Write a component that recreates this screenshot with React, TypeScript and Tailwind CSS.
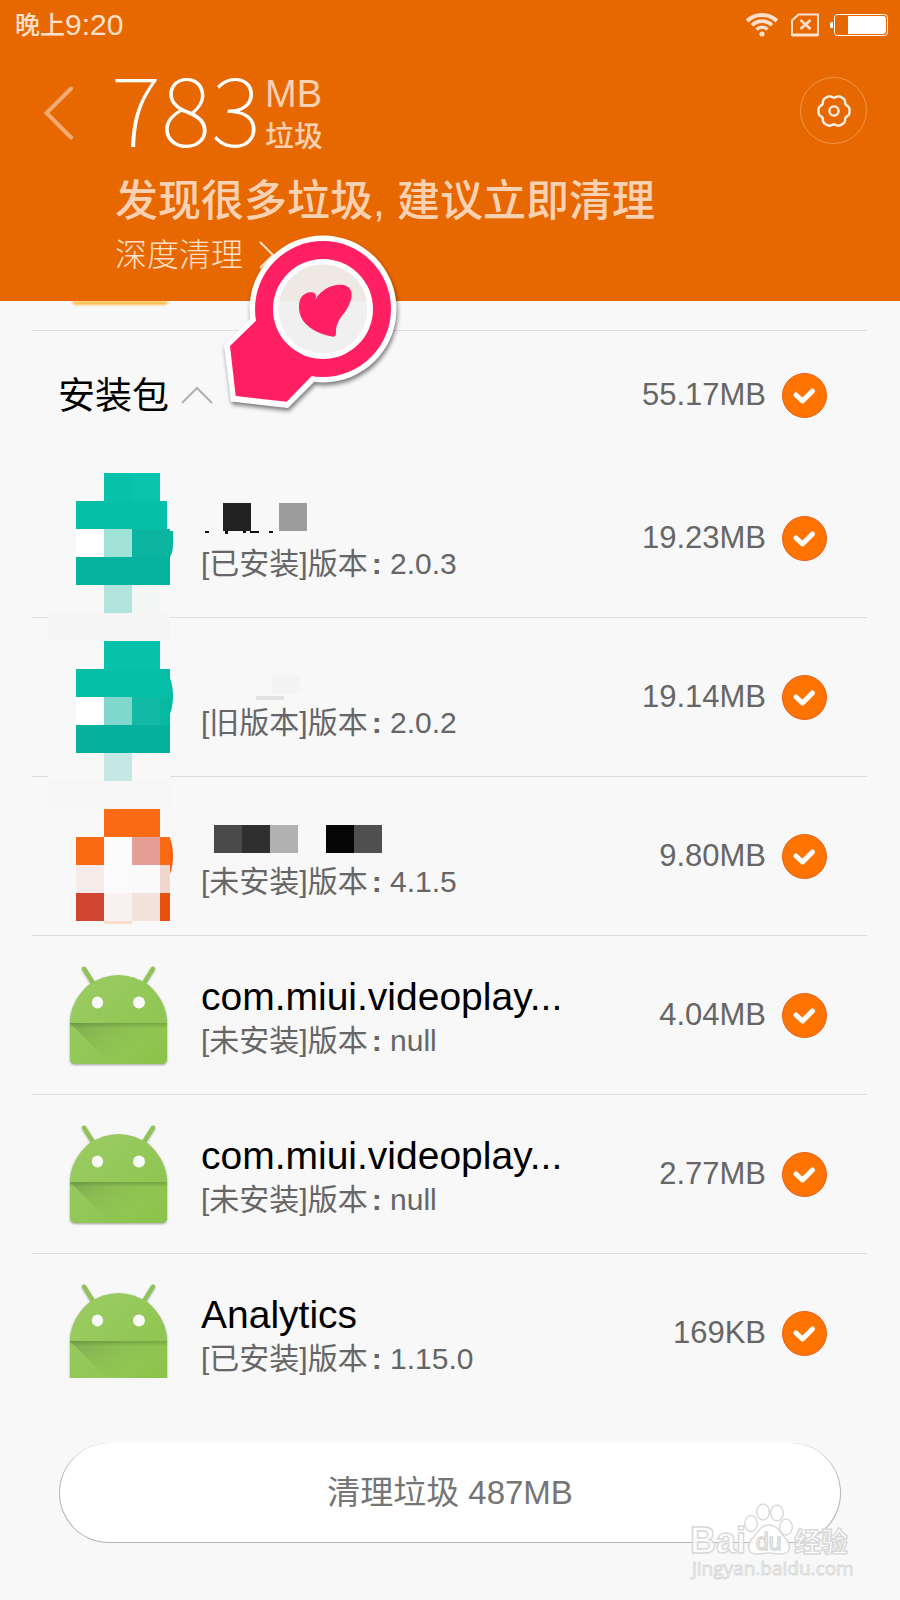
import { useState } from "react";

type Cell = [x: number, y: number, w: number, h: number, fill: string];

type Item = {
  id: number;
  name?: string;
  nameCells?: Cell[];
  iconCells?: Cell[];
  edge?: { d: string; fill: string };
  status: string;
  version: string;
  size: string;
};

const items: Item[] = [
  {
    id: 1,
    nameCells: [
      [22, 0, 28, 28, "#222222"],
      [78, 0, 28, 28, "#9c9c9c"],
      [4, 28, 4, 2, "#111111"],
      [24, 28, 3, 3, "#111111"],
      [42, 28, 3, 2, "#111111"],
      [49, 28, 9, 2, "#111111"],
      [68, 28, 4, 2, "#111111"],
    ],
    iconCells: [
      [56, 14, 28, 28, "#07c2a9"],
      [84, 14, 28, 28, "#0ac3ab"],
      [28, 42, 91, 28, "#05bfa8"],
      [28, 70, 28, 28, "#ffffff"],
      [56, 70, 28, 28, "#a1e3d9"],
      [84, 70, 38, 28, "#0bb5a0"],
      [28, 98, 94, 28, "#05b29f"],
      [56, 126, 28, 28, "#b2e4de"],
      [84, 126, 28, 28, "#f4f6f5"],
      [0, 154, 122, 28, "#f5f5f5"],
    ],
    edge: { d: "M119 72h6v14q0 7-3 12h-3z", fill: "#09b7a1" },
    status: "已安装",
    version: "2.0.3",
    size: "19.23MB",
  },
  {
    id: 2,
    nameCells: [
      [71, 13, 28, 19, "#f4f4f4"],
      [55, 34, 28, 4, "#e2e2e2"],
    ],
    iconCells: [
      [56, 23, 56, 28, "#07c2a9"],
      [28, 51, 94, 28, "#05bfa8"],
      [28, 79, 28, 28, "#ffffff"],
      [56, 79, 28, 28, "#7fd8cb"],
      [84, 79, 28, 28, "#12b9a4"],
      [112, 79, 10, 28, "#07b8a2"],
      [28, 107, 94, 28, "#05b19e"],
      [0, 135, 122, 28, "#f8f8f8"],
      [56, 135, 28, 28, "#c6e8e4"],
      [0, 163, 122, 28, "#f6f6f6"],
    ],
    edge: { d: "M122 60q3 8 3 18t-3 18z", fill: "#07bba5" },
    status: "旧版本",
    version: "2.0.2",
    size: "19.14MB",
  },
  {
    id: 3,
    nameCells: [
      [13, 4, 28, 28, "#4a4a4a"],
      [41, 4, 28, 28, "#2f2f2f"],
      [69, 4, 28, 28, "#b1b1b1"],
      [125, 4, 28, 28, "#060606"],
      [153, 4, 28, 28, "#505050"],
    ],
    iconCells: [
      [56, 32, 56, 28, "#fb6b14"],
      [28, 60, 28, 28, "#fb6b14"],
      [56, 60, 28, 28, "#fcfcfc"],
      [84, 60, 28, 28, "#e59e96"],
      [112, 60, 10, 28, "#fb6b14"],
      [28, 88, 28, 28, "#f6ebe9"],
      [56, 88, 28, 28, "#fcfbfb"],
      [84, 88, 28, 28, "#fafafa"],
      [112, 88, 10, 28, "#f1d6d0"],
      [28, 116, 28, 28, "#d04632"],
      [56, 116, 28, 28, "#f8f3f0"],
      [84, 116, 28, 28, "#f4e3dc"],
      [112, 116, 10, 28, "#e8520f"],
      [56, 144, 28, 3, "#f9dcce"],
    ],
    edge: { d: "M122 61q3 8 3 18t-3 18z", fill: "#f4600f" },
    status: "未安装",
    version: "4.1.5",
    size: "9.80MB",
  },
  { id: 4, name: "com.miui.videoplay...", status: "未安装", version: "null", size: "4.04MB" },
  { id: 5, name: "com.miui.videoplay...", status: "未安装", version: "null", size: "2.77MB" },
  { id: 6, name: "Analytics", status: "已安装", version: "1.15.0", size: "169KB" },
];

// six flat lobes around the centre
const gearPath =
  Array.from({ length: 72 }, (_, i) => {
    const a = (i * 5 * Math.PI) / 180;
    const r = 14.8 + 1.1 * Math.cos(6 * a) - 0.4 * Math.cos(12 * a);
    return `${i ? "L" : "M"}${(17 + r * Math.cos(a)).toFixed(2)} ${(17 + r * Math.sin(a)).toFixed(2)}`;
  }).join("") + "Z";

function Cells({ cells }: { cells: Cell[] }) {
  return (
    <g shapeRendering="crispEdges">
      {cells.map(([x, y, w, h, fill], i) => (
        <rect key={i} x={x} y={y} width={w} height={h} fill={fill} />
      ))}
    </g>
  );
}

function StatusBar() {
  return (
    <div className="flex h-[50px] items-center justify-between pl-[15px] pr-3 text-[#fce0cb]">
      <div className="flex items-center leading-8">
        <span className="text-[25px] font-medium">晚上</span>
        <span className="text-[30px]">9:20</span>
      </div>
      <div className="flex items-center">
        <svg width="34" height="24" viewBox="0 0 34 24" fill="none" stroke="currentColor" strokeWidth="4">
          <circle cx="17" cy="21" r="2.6" fill="currentColor" stroke="none" />
          <path d="M11.5 16.5a7.6 7.6 0 0 1 11 0" strokeWidth="3.4" />
          <path d="M7 12.2a14.200 14.200 0 0 1 20 0" strokeWidth="3.6" />
          <path d="M2.200 8a21.500 21.500 0 0 1 29.600 0" strokeWidth="4" />
        </svg>
        <svg className="ml-3" width="28" height="24" viewBox="0 0 28 24" fill="none" stroke="currentColor">
          <path d="M7.5 1.5H27V22H1V7.5z" strokeWidth="2" />
          <path d="M1 22h26" strokeWidth="3" />
          <path d="M9.5 7l10 9M19.5 7l-10 9" strokeWidth="2.6" />
        </svg>
        <svg className="ml-[11px]" width="58" height="22" viewBox="0 0 58 22" fill="none">
          <path d="M3 8v6H1.5Q0 14 0 12.500V9.500Q0 8 1.500 8z" fill="#fff" />
          <rect x="4.500" y="0.500" width="53" height="21" rx="3" stroke="#fff" />
          <path d="M18 2h35q3 0 3 3v12q0 3-3 3H18z" fill="#fff" />
        </svg>
      </div>
    </div>
  );
}

function AndroidIcon() {
  return (
    <svg
      className="block overflow-visible drop-shadow-[0_1px_1px_rgba(0,0,0,0.35)]"
      width="97"
      height="100"
      viewBox="0 0 90 100"
      preserveAspectRatio="none"
    >
      <defs>
        <linearGradient id="robot" x1="0" y1="0" x2="1" y2="1">
          <stop offset="0" stopColor="#9ccc65" />
          <stop offset="1" stopColor="#8bc34a" />
        </linearGradient>
        <linearGradient id="fold" x1="0" y1="0" x2="1" y2="0.6">
          <stop offset="0" stopColor="#7da652" />
          <stop offset="0.8" stopColor="#8bc34a" stopOpacity="0" />
        </linearGradient>
        <linearGradient id="seam" x1="0" y1="0" x2="0" y2="1">
          <stop offset="0" stopColor="#5f8a35" stopOpacity="0.55" />
          <stop offset="1" stopColor="#5f8a35" stopOpacity="0" />
        </linearGradient>
      </defs>
      <path d="M13 3.500L22 19M77 3.500L68 19" stroke="#8fc453" strokeWidth="4" strokeLinecap="round" />
      <path d="M0 56Q1 36 17 20Q31 10 45 10T73 20Q89 36 90 56V94Q90 99 85 99H5Q0 99 0 94z" fill="url(#robot)" />
      <path d="M0 58H90V99H38z" fill="url(#fold)" />
      <rect x="0" y="58" width="90" height="5" fill="url(#seam)" />
      <ellipse cx="25.500" cy="37.500" rx="5.200" ry="6" fill="#fafafa" />
      <ellipse cx="64" cy="37.500" rx="5.500" ry="6" fill="#fafafa" />
    </svg>
  );
}

function Check({ label, checked, onChange }: { label: string; checked: boolean; onChange: () => void }) {
  return (
    <span className="grid size-[45px] shrink-0">
      <input
        type="checkbox"
        aria-label={label}
        checked={checked}
        onChange={onChange}
        className="peer col-start-1 row-start-1 size-full appearance-none rounded-full border border-gray-300 checked:border-[#ea5f14] checked:bg-[#ff7300]"
      />
      <svg
        className="pointer-events-none invisible col-start-1 row-start-1 peer-checked:visible"
        viewBox="0 0 45 45"
        fill="none"
        stroke="#fff"
        strokeWidth="5"
        strokeLinecap="round"
        strokeLinejoin="round"
      >
        <path d="M14 22l6.500 6L30.500 18" />
      </svg>
    </span>
  );
}

function Row({ item, checked, onToggle }: { item: Item; checked: boolean; onToggle: () => void }) {
  return (
    <li className="relative flex h-[159px] shrink-0 items-center border-b border-[#dedede] pl-[38px] pr-10">
      <div className="w-[97px] shrink-0">
        {item.iconCells ? (
          <svg className="absolute left-4 top-0 z-10 overflow-visible" width="126" height="192" viewBox="0 0 126 192">
            <Cells cells={item.iconCells} />
            {item.edge && <path d={item.edge.d} fill={item.edge.fill} />}
          </svg>
        ) : (
          <AndroidIcon />
        )}
      </div>
      <div className="ml-[34px] min-w-0 flex-1 pt-2">
        <div className="h-11 truncate text-[39px] leading-11 text-black">
          {item.name}
          {item.nameCells && (
            <svg className="block" width="200" height="44" viewBox="0 -5 200 44">
              <Cells cells={item.nameCells} />
            </svg>
          )}
        </div>
        <p className="whitespace-nowrap text-[30px] leading-11 text-[#666]">
          [{item.status}]版本<span className="ml-1 font-bold">:</span> {item.version}
        </p>
      </div>
      <span className="mr-4 text-[31px] text-[#666]">{item.size}</span>
      <Check label={item.name ?? item.status} checked={checked} onChange={onToggle} />
    </li>
  );
}

function Pin() {
  return (
    <svg
      className="pointer-events-none absolute left-[218px] top-[230px] z-20 drop-shadow-[1px_3px_2px_rgba(0,0,0,0.5)]"
      width="186"
      height="184"
      viewBox="218 230 186 184"
    >
      <path d="M251 318L224 345L231 401.500L288 408L314 382z" fill="#fff" />
      <circle cx="323" cy="309" r="73.500" fill="#fff" />
      <circle cx="323" cy="309" r="68" fill="#ff1f63" />
      <path d="M255.700 321L230 346L235.700 396L286.700 401.700L311.700 376L323 350L280 309z" fill="#ff1f63" />
      <circle cx="323" cy="309" r="50" fill="#fff" />
      <circle cx="323" cy="309" r="44.500" fill="#f0f0f0" />
      <path d="M279.200 301a44.500 44.500 0 0 1 87.600 0z" fill="#efe9e4" />
      <path
        d="M313 300.500C316 299 317 296 315 293.500C312 291 305 292 301.500 297C298 302 298.500 311 301 317C306 328 319 334 332 336.500C335 337 336 336.500 336 333C335.500 324 340 318 345 312C350 305 353 296 351 291C349 285 342 284 335 285.200C325 287 319 294 316 298.500z"
        fill="#ff1f63"
      />
    </svg>
  );
}

function Watermark() {
  return (
    <svg
      className="pointer-events-none absolute bottom-4 right-12 overflow-visible"
      width="162"
      height="84"
      viewBox="0 0 162 84"
      fill="#fff"
      fillOpacity="0.8"
      stroke="#d9d9d9"
      strokeWidth="1.500"
    >
      <text x="0" y="53" className="text-[36px] font-bold">Bai</text>
      <ellipse cx="61" cy="23.500" rx="6.300" ry="8" />
      <ellipse cx="73" cy="12" rx="6.300" ry="8" />
      <ellipse cx="87" cy="13" rx="6.300" ry="8" />
      <ellipse cx="96" cy="27" rx="6.300" ry="8" />
      <path d="M79 25C88 25 90 33 96 39C102 46 100 54 91 54C86 54 84 53 79 53S72 54 67 54C58 54 56 46 62 39C68 33 70 25 79 25z" />
      <text x="66" y="50" className="text-[23px]">du</text>
      <text x="104" y="52" className="text-[27px] font-bold">经验</text>
      <text x="2" y="75" strokeWidth="1" className="font-['Open_Sans'] text-[19px]">jingyan.baidu.com</text>
    </svg>
  );
}

export default function App() {
  const [open, setOpen] = useState(true);
  const [selected, setSelected] = useState<number[]>(items.map((i) => i.id));

  const allSelected = selected.length === items.length;

  const toggle = (id: number) => {
    setSelected((prev) => (prev.includes(id) ? prev.filter((i) => i !== id) : [...prev, id]));
  };

  return (
    <div className="relative flex h-screen flex-col overflow-hidden bg-[#f8f8f8] font-['Liberation_Sans','Noto_Sans_CJK_SC',sans-serif]">
      <header className="shrink-0 bg-[#e76800]">
        <StatusBar />
        <div className="flex items-start pb-[26px] pl-11 pr-[33px] pt-6">
          <button aria-label="返回" className="mt-3 w-[71px] text-[#f4ab73]">
            <svg width="30" height="54" viewBox="0 0 30 54" fill="none" stroke="currentColor" strokeWidth="4">
              <path d="M27 2.500L2.500 27L27 51.500" strokeLinecap="round" />
            </svg>
          </button>
          <div className="min-w-0 flex-1 text-[#fad1b2]">
            <div className="-ml-1 flex h-20 items-center">
              <span className="pb-4 font-['Noto_Sans_CJK_SC',sans-serif] text-[96px] font-thin leading-20 text-white">783</span>
              <div className="ml-1 pt-[6px]">
                <div className="text-[38px] leading-10">MB</div>
                <div className="text-[29px] font-medium leading-[46px]">垃圾</div>
              </div>
            </div>
            <h1 className="mt-[22px] text-[43px] font-medium leading-[50px]">发现很多垃圾, 建议立即清理</h1>
            <a href="#deep" className="mt-[9px] inline-flex items-center gap-4 text-[32px] font-light leading-10 text-[#fce0cb]">
              深度清理
              <svg width="16" height="28" viewBox="0 0 16 28" fill="none" stroke="currentColor" strokeWidth="2">
                <path d="M1 1l13 13L1 27" />
              </svg>
            </a>
          </div>
          <button
            aria-label="设置"
            className="mt-[3px] grid size-[67px] shrink-0 place-items-center rounded-full border border-[#f0954d]"
          >
            <svg width="34" height="34" viewBox="0 0 34 34" fill="none" stroke="#fff" strokeOpacity="0.9" strokeWidth="2.400">
              <path d={gearPath} />
              <circle cx="17" cy="17" r="4.600" />
            </svg>
          </button>
        </div>
      </header>

      <main className="flex min-h-0 flex-1 flex-col overflow-hidden pl-8 pr-[33px]">
        <div className="h-[30px] shrink-0 border-b border-[#dedede] pl-10">
          <div className="h-1 w-24 rounded-b-full bg-[#ffc04d] blur-[1px]" />
        </div>
        <div className="flex h-32 shrink-0 items-center pl-[26px] pr-10">
          <button
            onClick={() => setOpen(!open)}
            aria-expanded={open}
            className="flex items-center gap-3 text-[37px] text-black"
          >
            <span className="pt-1">安装包</span>
            <svg width="32" height="18" viewBox="0 0 32 18" fill="none" stroke="#b0b0b0" strokeWidth="2">
              <path d="M1 17L16 2l15 15" />
            </svg>
          </button>
          <span className="ml-auto mr-4 text-[31px] text-[#666]">55.17MB</span>
          <Check
            label="安装包"
            checked={allSelected}
            onChange={() => setSelected(allSelected ? [] : items.map((i) => i.id))}
          />
        </div>
        {open && (
          <ul className="flex flex-col">
            {items.map((item) => (
              <Row key={item.id} item={item} checked={selected.includes(item.id)} onToggle={() => toggle(item.id)} />
            ))}
          </ul>
        )}
      </main>

      <footer className="shrink-0 px-[59px] pb-[57px] pt-[65px]">
        <button className="h-[100px] w-full rounded-full border border-t-0 border-[#b4b4b4] bg-white text-[33px] text-[#757575]">
          清理垃圾 487MB
        </button>
      </footer>

      <Pin />
      <Watermark />
    </div>
  );
}
